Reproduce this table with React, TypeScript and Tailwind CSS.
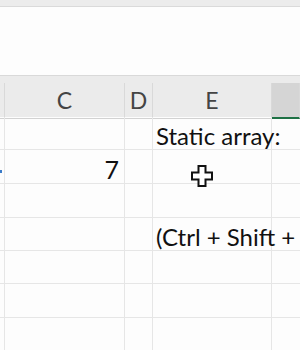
import React from 'react';

const COLS = ['w-[5px]', 'w-[120px]', 'w-[28px]', 'w-[119px]', 'flex-1'];
const ROW_HEIGHTS = ['h-[33px]', 'h-[34px]', 'h-[34px]', 'h-[33px]', 'h-[33px]', 'h-[34px]', 'h-[33px]'];

const font = { fontFamily: 'Lato, "Open Sans", sans-serif' };

function CrossCursor() {
  return (
    <svg width="22" height="22" viewBox="0 0 22 22" className="absolute left-[38px] top-[15px]">
      <polygon
        points="7.5,1 14.5,1 14.5,7.5 21,7.5 21,14.5 14.5,14.5 14.5,21 7.5,21 7.5,14.5 1,14.5 1,7.5 7.5,7.5"
        fill="#ffffff"
        stroke="#111111"
        strokeWidth="2"
        strokeLinejoin="miter"
      />
    </svg>
  );
}

function Cell({ col, children, className = '' }: { col: number; children?: React.ReactNode; className?: string }) {
  return (
    <div className={`${COLS[col]} shrink-0 relative border-r border-b border-[#e6e6e6] ${className}`}>
      {children}
    </div>
  );
}

export default function App() {
  const rows: Record<number, Record<number, React.ReactNode>> = {
    0: { 3: <span className="absolute left-[3px] bottom-[1px] whitespace-nowrap text-[24px] leading-none text-[#111]">Static array:</span> },
    1: {
      0: <span className="absolute left-0 top-[20px] w-[2px] h-[3px] bg-[#3b7bc8]" />,
      1: <span className="absolute right-[5px] bottom-[1px] text-[25px] leading-none text-[#111]">7</span>,
      3: <CrossCursor />,
    },
    3: { 3: <span className="absolute left-[3px] bottom-[1px] whitespace-nowrap text-[24px] leading-none text-[#111]">(Ctrl + Shift +</span> },
  };

  return (
    <div className="w-[300px] h-[350px] overflow-hidden bg-[#fdfdfd] flex flex-col" style={font}>
      {/* ribbon edge */}
      <div className="h-[7px] shrink-0 bg-[#ececec] border-b border-[#dadada]" />
      {/* formula bar area */}
      <div className="h-[68px] shrink-0 bg-[#fdfdfd]" />
      {/* column headers */}
      <div className="h-[42px] shrink-0 bg-[#ebebeb] border-t border-[#d9d9d9] flex flex-col">
        <div className="h-[7px] shrink-0" />
        <div className="flex-1 flex">
          {['', 'C', 'D', 'E', ''].map((letter, i) => (
            <div
              key={i}
              className={`${COLS[i]} shrink-0 flex items-center justify-center text-[23px] text-[#444] border-r border-[#d9d9d9] ${
                i === 4 ? 'bg-[#d5d5d5] border-b-2 border-b-[#1e7145]' : 'border-b border-b-[#d2d2d2]'
              }`}
            >
              {letter}
            </div>
          ))}
        </div>
      </div>
      {/* grid */}
      {ROW_HEIGHTS.map((h, r) => (
        <div key={r} className={`${h} shrink-0 flex`}>
          {COLS.map((_, c) => (
            <Cell key={c} col={c} className={c === 4 ? 'border-r-0' : ''}>
              {rows[r]?.[c]}
            </Cell>
          ))}
        </div>
      ))}
    </div>
  );
}
